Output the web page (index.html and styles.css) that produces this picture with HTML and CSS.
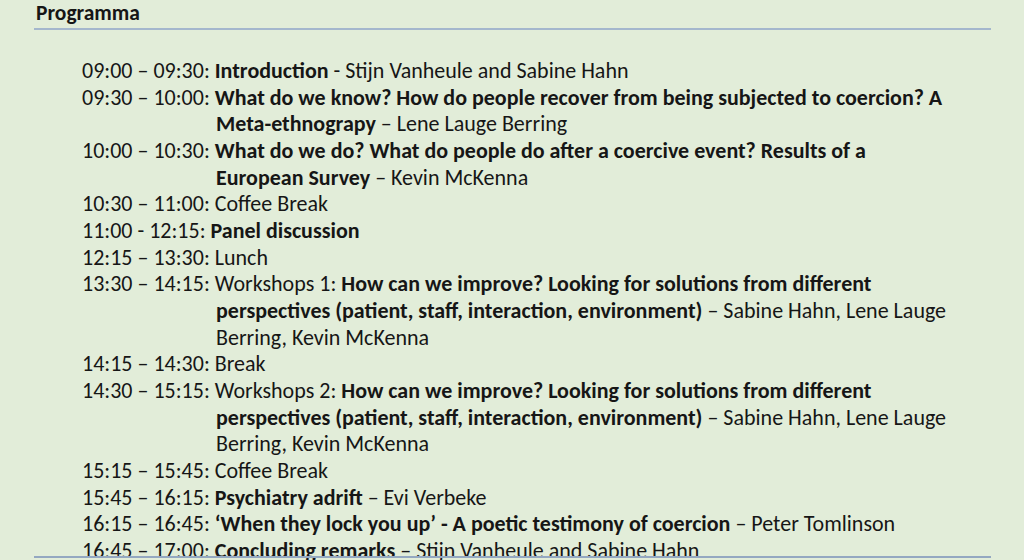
FILE: index.html
```html
<!DOCTYPE html>
<html lang="nl">
<head>
<meta charset="utf-8">
<title>Programma</title>
<link rel="stylesheet" href="styles.css">
</head>
<body>
<div class="page">
  <header class="head">
    <h1 class="title">Programma</h1>
  </header>
  <div class="schedule">
    <ul class="items">
      <li class="item">09:00 – 09:30: <b>Introduction</b> - Stijn Vanheule and Sabine Hahn</li>
      <li class="item">09:30 – 10:00: <b>What do we know? How do people recover from being subjected to coercion? A<br>Meta-ethnograpy</b> – Lene Lauge Berring</li>
      <li class="item">10:00 – 10:30: <b>What do we do? What do people do after a coercive event? Results of a<br>European Survey</b> – Kevin McKenna</li>
      <li class="item">10:30 – 11:00: Coffee Break</li>
      <li class="item">11:00 - 12:15: <b>Panel discussion</b></li>
      <li class="item">12:15 – 13:30: Lunch</li>
      <li class="item">13:30 – 14:15: Workshops 1: <b>How can we improve? Looking for solutions from different<br>perspectives (patient, staff, interaction, environment)</b> – Sabine Hahn, Lene Lauge<br>Berring, Kevin McKenna</li>
      <li class="item">14:15 – 14:30: Break</li>
      <li class="item">14:30 – 15:15: Workshops 2: <b>How can we improve? Looking for solutions from different<br>perspectives (patient, staff, interaction, environment)</b> – Sabine Hahn, Lene Lauge<br>Berring, Kevin McKenna</li>
      <li class="item">15:15 – 15:45: Coffee Break</li>
      <li class="item">15:45 – 16:15: <b>Psychiatry adrift</b> – Evi Verbeke</li>
      <li class="item">16:15 – 16:45: <b>‘When they lock you up’ - A poetic testimony of coercion</b> – Peter Tomlinson</li>
      <li class="item">16:45 – 17:00: <b>Concluding remarks</b> – Stijn Vanheule and Sabine Hahn</li>
    </ul>
  </div>
  <div class="foot-rule"></div>
</div>
</body>
</html>
```

FILE: styles.css
```css
html, body {
  margin: 0;
  padding: 0;
  background: #e2edd9;
}

body {
  font-family: "Carlito", "Lato", "Liberation Sans", sans-serif;
  color: #161616;
  width: 1024px;
  height: 560px;
  overflow: hidden;
}

.page {
  display: flex;
  flex-direction: column;
  height: 560px;
}

.head {
  margin: 0 33px 0 34px;
  border-bottom: 2px solid #a4b7cd;
  height: 30px;
  box-sizing: border-box;
  padding-left: 2px;
}

.title {
  margin: 0;
  font-size: 21.5px;
  font-weight: 700;
  line-height: 26px;
}

.schedule {
  height: 526px;
  flex: none;
}

.items {
  list-style: none;
  margin: 0;
  padding: 28px 0 0 82px;
  font-size: 22px;
  line-height: 26.67px;
  white-space: nowrap;
}

.item {
  padding-left: 134px;
  text-indent: -134px;
}

.item b {
  font-weight: 700;
}

.foot-rule {
  position: relative;
  margin: 0 33px 0 34px;
  border-top: 2px solid #94a8c1;
}
```
